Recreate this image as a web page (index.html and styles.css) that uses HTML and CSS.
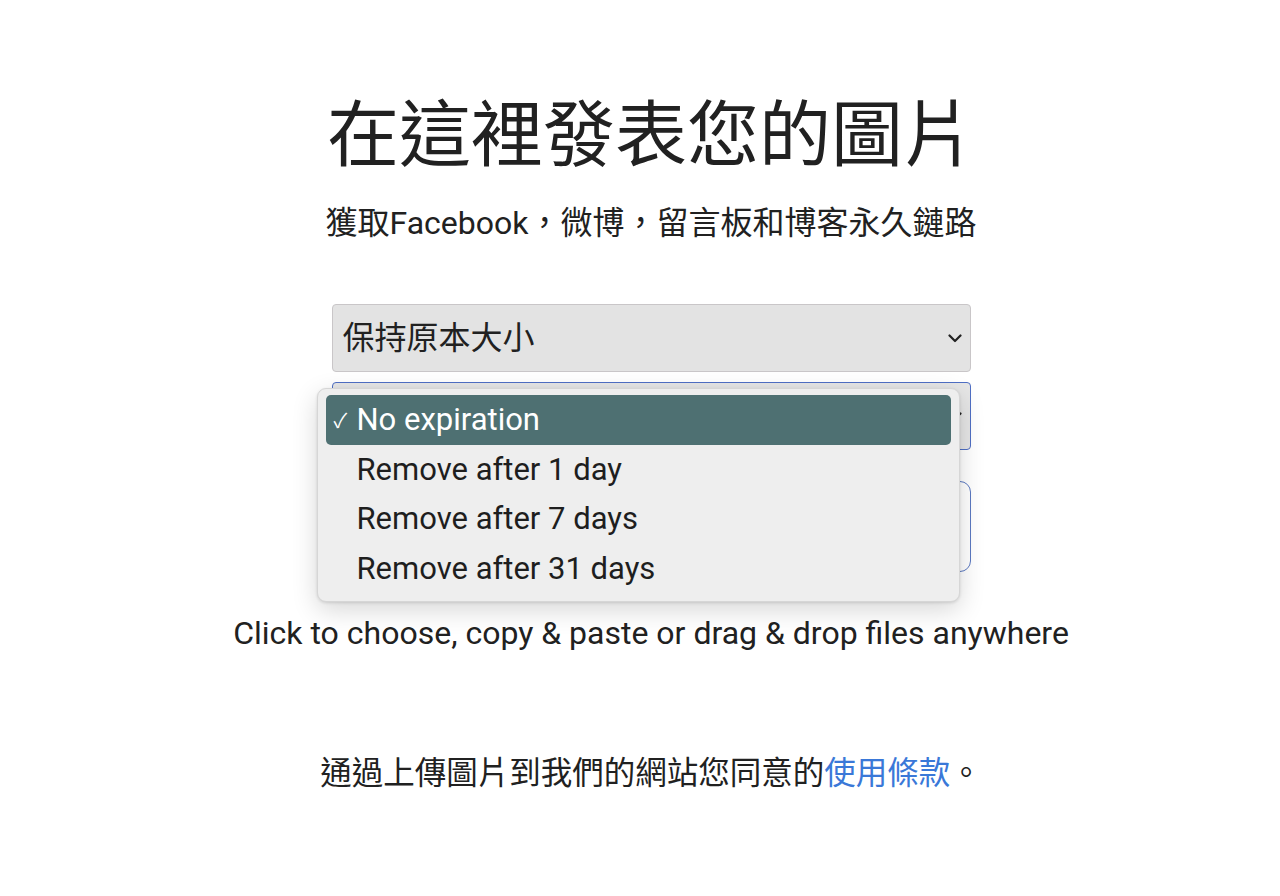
FILE: index.html
```html
<!DOCTYPE html>
<html lang="zh-Hant">
<head>
<meta charset="utf-8">
<title>在這裡發表您的圖片</title>
<link rel="stylesheet" href="styles.css">
</head>
<body>
<main class="page">
  <h1 class="title">在這裡發表您的圖片</h1>
  <p class="subtitle">獲取Facebook，微博，留言板和博客永久鏈路</p>
  <div class="form">
    <div class="select select-size">
      <span class="select-text">保持原本大小</span>
      <svg class="chevron" width="14" height="9" viewBox="0 0 14 9"><path d="M1.5 1.5 L7 7 L12.5 1.5" fill="none" stroke="#222" stroke-width="2.2" stroke-linecap="round" stroke-linejoin="round"/></svg>
    </div>
    <div class="select select-expire">
      <span class="select-text"></span>
      <svg class="chevron" width="14" height="9" viewBox="0 0 14 9"><path d="M1.5 1.5 L7 7 L12.5 1.5" fill="none" stroke="#222" stroke-width="2.2" stroke-linecap="round" stroke-linejoin="round"/></svg>
      <ul class="menu">
        <li class="menu-item selected"><span class="check">✓</span>No expiration</li>
        <li class="menu-item">Remove after 1 day</li>
        <li class="menu-item">Remove after 7 days</li>
        <li class="menu-item">Remove after 31 days</li>
      </ul>
    </div>
    <div class="dropzone"></div>
  </div>
  <p class="hint">Click to choose, copy &amp; paste or drag &amp; drop files anywhere</p>
  <p class="terms">通過上傳圖片到我們的網站您同意的<a class="terms-link" href="#">使用條款</a>。</p>
</main>
</body>
</html>
```

FILE: styles.css
```css
* { box-sizing: border-box; }
html, body { background: #ffffff; }
body {
  margin: 0;
  padding-left: 22px;
  color: #212121;
  font-family: Roboto, "Noto Sans CJK TC", "Noto Sans", sans-serif;
}
.page {
  display: flex;
  flex-direction: column;
  align-items: center;
}
.title {
  margin: 86px 0 0;
  font-family: "Noto Sans CJK TC", sans-serif;
  font-weight: 400;
  font-size: 72px;
  line-height: 86px;
}
.subtitle {
  margin: 31px 0 0;
  font-size: 32px;
  line-height: 40px;
}
.form {
  margin-top: 61px;
  width: 639px;
  display: flex;
  flex-direction: column;
}
.select {
  position: relative;
  height: 68px;
  border-radius: 4px;
  display: flex;
  align-items: center;
  justify-content: space-between;
  padding: 0 8px 0 10px;
  font-size: 32px;
}
.select-size {
  background: #e3e3e3;
  border: 1px solid #c9c6c8;
}
.select-expire {
  margin-top: 10px;
  background: #e6e6e6;
  border: 1.5px solid #4f6fc4;
}
.select-text { line-height: 40px; }
.chevron { flex: none; }
.dropzone {
  margin-top: 31px;
  height: 91px;
  border: 1.5px solid #5b79c2;
  border-radius: 11px;
  background: #ffffff;
}
.menu {
  position: absolute;
  left: -16px;
  top: 5px;
  width: 643px;
  margin: 0;
  padding: 6px 8px 8px;
  list-style: none;
  background: #eeeeee;
  border: 1px solid #d6d6d6;
  border-radius: 9px;
  box-shadow: 0 8px 26px rgba(0,0,0,0.16), 0 1px 3px rgba(0,0,0,0.12);
  z-index: 5;
}
.menu-item {
  height: 49.5px;
  display: flex;
  align-items: center;
  padding-left: 31px;
  font-size: 31px;
  color: #1e1e1e;
  border-radius: 5px;
  position: relative;
}
.menu-item.selected {
  background: #4e7072;
  color: #ffffff;
}
.check {
  position: absolute;
  left: 8px;
  font-size: 20px;
}
.hint {
  margin: 41px 0 0;
  font-size: 32px;
  line-height: 40px;
}
.terms {
  margin: 97px 0 0;
  font-size: 31.5px;
  line-height: 40px;
  font-family: "Noto Sans CJK TC", sans-serif;
}
.terms-link {
  color: #3a78d8;
  text-decoration: none;
}
```
